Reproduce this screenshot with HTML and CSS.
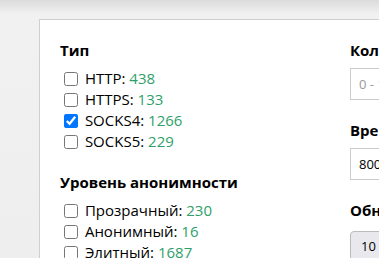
FILE: index.html
```html
<!DOCTYPE html>
<html lang="ru">
<head>
    <meta charset="UTF-8">
    <meta name="viewport" content="width=device-width, initial-scale=1.0">
    <title>Фильтр прокси</title>
    <link rel="stylesheet" href="styles.css">
</head>
<body>
    <div class="page">
        <div class="card">
            <div class="col-left">
                <h3>Тип</h3>
                <ul class="checks">
                    <li><label><input type="checkbox"> HTTP: <span class="num">438</span></label></li>
                    <li><label><input type="checkbox"> HTTPS: <span class="num">133</span></label></li>
                    <li><label><input type="checkbox" checked> SOCKS4: <span class="num">1266</span></label></li>
                    <li><label><input type="checkbox"> SOCKS5: <span class="num">229</span></label></li>
                </ul>

                <h3>Уровень анонимности</h3>
                <ul class="checks">
                    <li><label><input type="checkbox"> Прозрачный: <span class="num">230</span></label></li>
                    <li><label><input type="checkbox"> Анонимный: <span class="num">16</span></label></li>
                    <li><label><input type="checkbox"> Элитный: <span class="num">1687</span></label></li>
                </ul>
            </div>
            <div class="col-right">
                <h3>Количество</h3>
                <input type="text" class="field" placeholder="0 - 1000">

                <h3>Время ответа</h3>
                <input type="text" class="field" value="800">

                <h3>Обновление</h3>
                <select class="select">
                    <option>10 минут</option>
                </select>
            </div>
        </div>
    </div>
</body>
</html>
```

FILE: styles.css
```css
body {
    margin: 0;
    font-family: "Open Sans", "Noto Sans", Arial, sans-serif;
    background-color: #ececec;
    background-image: linear-gradient(to bottom, #dcdcdc 0, #f1f1f1 14px, #eeeeee 100%);
    color: #000;
    height: 258px;
    overflow: hidden;
}
.page {
    padding: 19px 0 0 39px;
}
.card {
    display: flex;
    gap: 20px;
    width: 600px;
    padding: 20px;
    background-color: #fff;
    border: 1px solid #cfcfcf;
}
.col-left {
    width: 270px;
}
.col-right {
    width: 260px;
}
h3 {
    margin: 0 0 8px;
    font-size: 15px;
    line-height: 20px;
    font-weight: 700;
}
.checks {
    list-style: none;
    margin: 0 0 20px;
    padding: 0;
}
.checks li {
    height: 21px;
    line-height: 21px;
    font-size: 15px;
}
.checks label {
    display: flex;
    align-items: center;
    white-space: pre;
}
.checks input {
    margin: 0 3px 0 4px;
    width: 14px;
    height: 14px;
}
.num {
    color: #2f9f6a;
}
.field {
    display: block;
    box-sizing: border-box;
    width: 100%;
    height: 32px;
    margin: 1px 0 20px;
    padding: 0 8px;
    border: 1px solid #ccc;
    font-family: inherit;
    font-size: 13px;
    color: #000;
}
.field::placeholder {
    color: #999;
}
.select {
    box-sizing: border-box;
    width: 100%;
    height: 30px;
    margin-top: 3px;
    padding: 0 6px;
    border: 1px solid #bbb;
    border-radius: 4px;
    background-color: #e9e9ed;
    font-family: inherit;
    font-size: 13px;
}
```
